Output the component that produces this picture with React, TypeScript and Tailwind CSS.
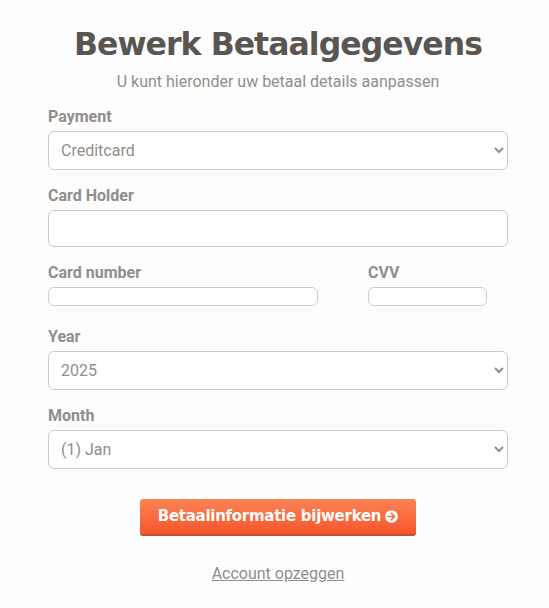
import { FaArrowCircleRight } from 'react-icons/fa';

const labelClass = 'block text-[16px] leading-[24px] font-bold text-[#928d8a]';
const fieldClass =
  'block w-full rounded-[6px] border border-[#cbcbcb] bg-white text-[16px] text-[#928d8a] font-["Roboto",sans-serif]';

export default function App() {
  return (
    <div className='min-h-[608px] w-full bg-[#fdfdfd] pt-[21px] pr-[41px] pl-12 font-["Roboto",sans-serif]'>
      <h1 className='text-center font-["DejaVu_Sans",sans-serif] text-[31.5px] leading-[46px] font-bold tracking-[-0.95px] whitespace-nowrap text-[#595552]'>
        Bewerk Betaalgegevens
      </h1>
      <p className="mt-[3px] text-center text-[16px] leading-[24px] text-[#928d8a]">
        U kunt hieronder uw betaal details aanpassen
      </p>

      <form className="mt-[11px]">
        <label className={labelClass}>Payment</label>
        <select className={`${fieldClass} mt-[2px] h-[39px] pl-2`} defaultValue="Creditcard">
          <option>Creditcard</option>
        </select>

        <label className={`${labelClass} mt-[14px]`}>Card Holder</label>
        <input type="text" className={`${fieldClass} mt-[2px] h-[37px]`} />

        <div className="mt-[14px] flex">
          <div className="w-[270px]">
            <label className={labelClass}>Card number</label>
            <input type="text" className={`${fieldClass} mt-[2px] h-[19px]`} />
          </div>
          <div className="ml-[50px] w-[119px]">
            <label className={labelClass}>CVV</label>
            <input type="text" className={`${fieldClass} mt-[2px] h-[19px]`} />
          </div>
        </div>

        <label className={`${labelClass} mt-[19px]`}>Year</label>
        <select className={`${fieldClass} mt-[2px] h-[39px] pl-2`} defaultValue="2025">
          <option>2025</option>
        </select>

        <label className={`${labelClass} mt-[14px]`}>Month</label>
        <select className={`${fieldClass} mt-[2px] h-[39px] pl-2`} defaultValue="(1) Jan">
          <option>(1) Jan</option>
        </select>

        <div className="mt-[30px] flex justify-center">
          <button
            type="button"
            className='flex h-[37px] w-[276px] items-center justify-center gap-[4px] rounded-[3px] border-b-2 border-[#b9543a] bg-gradient-to-b from-[#f98354] to-[#f8532a] font-["DejaVu_Sans",sans-serif] text-[15px] font-bold tracking-[-0.27px] whitespace-nowrap text-white'
          >
            Betaalinformatie bijwerken
            <FaArrowCircleRight className="h-[13px] w-[13px]" />
          </button>
        </div>

        <div className="mt-[26px] text-center">
          <a href="#" className="text-[16px] leading-[24px] text-[#928d8a] underline">
            Account opzeggen
          </a>
        </div>
      </form>
    </div>
  );
}
